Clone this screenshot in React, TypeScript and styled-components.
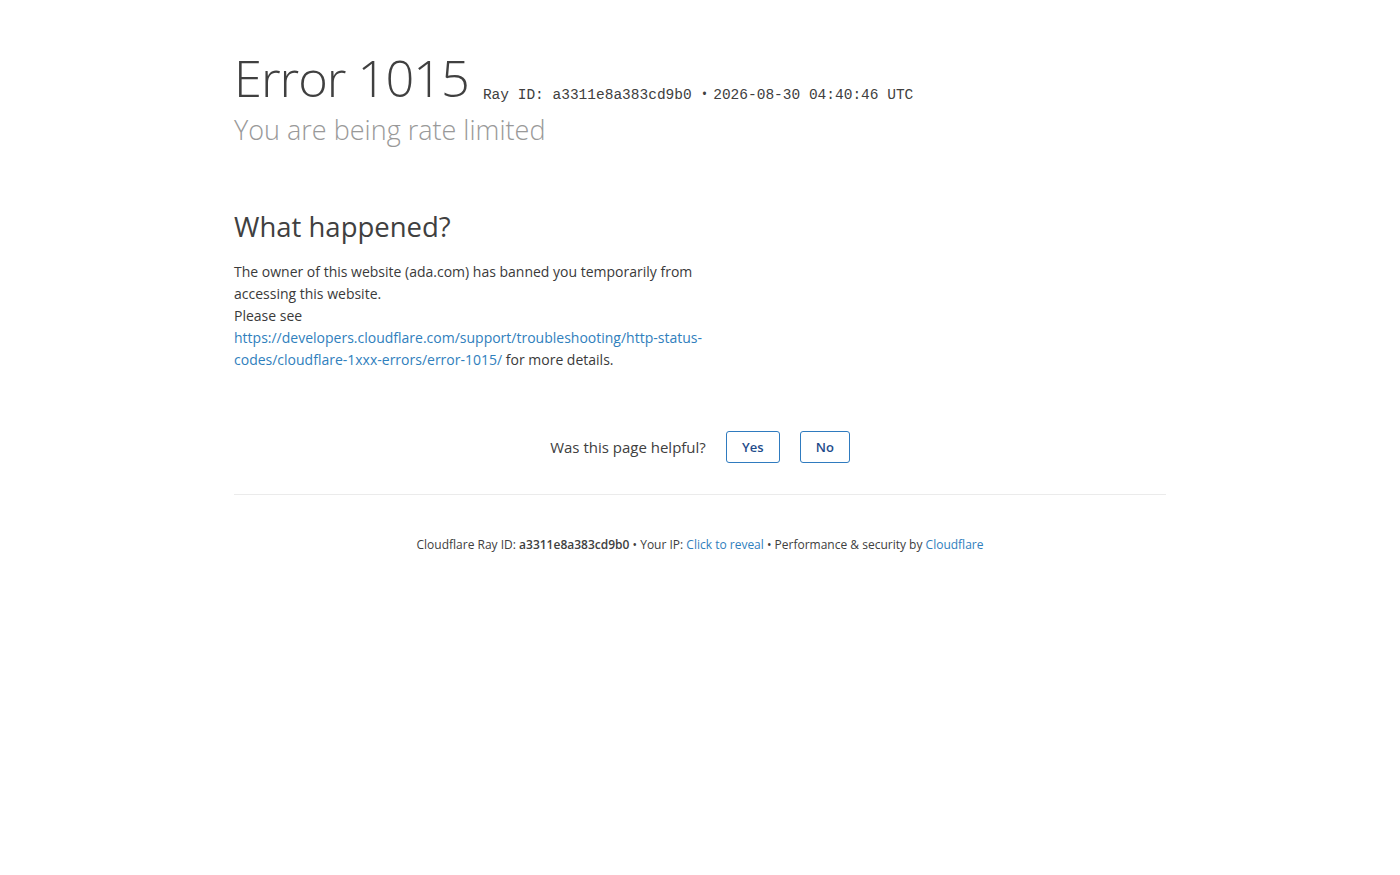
import React from 'react';
import styled, { createGlobalStyle } from 'styled-components';

const GlobalStyle = createGlobalStyle`
  html, body {
    margin: 0;
    padding: 0;
    background: #fff;
  }
  body {
    font-family: 'Open Sans', 'Noto Sans', sans-serif;
    color: #404040;
  }
`;

const Page = styled.div`
  width: 932px;
  margin: 0 auto;
  padding-top: 48px;
`;

const Header = styled.header`
  display: flex;
  flex-direction: column;
`;

const TitleRow = styled.div`
  display: flex;
  align-items: flex-end;
  gap: 14px;
`;

const Title = styled.h1`
  margin: 0;
  font-weight: 300;
  font-size: 50.5px;
  line-height: 60px;
  color: #404040;
  letter-spacing: -1px;
`;

const Meta = styled.span`
  font-family: 'Liberation Mono', 'Courier New', monospace;
  font-size: 14.5px;
  line-height: 16px;
  padding-bottom: 5px;
  color: #404040;
`;

const Dot = styled.span`
  font-family: 'Open Sans', 'Noto Sans', sans-serif;
  margin: 0 6px 0 10px;
`;

const Subtitle = styled.h2`
  margin: 4px 0 0;
  font-weight: 300;
  font-size: 27px;
  line-height: 36px;
  color: #999;
`;

const Section = styled.section`
  margin-top: 59px;
  width: 480px;
`;

const SectionTitle = styled.h2`
  margin: 0 0 14px;
  font-weight: 400;
  font-size: 27.5px;
  line-height: 40px;
  color: #404040;
`;

const Body = styled.p`
  margin: 0;
  font-size: 14px;
  line-height: 22px;
  color: #3a3a3a;
`;

const Link = styled.a`
  color: #3080bd;
  text-decoration: none;
`;

const Feedback = styled.div`
  display: flex;
  justify-content: center;
  align-items: center;
  gap: 20px;
  margin-top: 60px;
  padding-bottom: 31px;
  border-bottom: 1px solid #ebebeb;
`;

const Question = styled.span`
  font-size: 15px;
  color: #404040;
`;

const Buttons = styled.div`
  display: flex;
  gap: 20px;
`;

const FeedbackButton = styled.button<{ $w: number }>`
  width: ${(p) => p.$w}px;
  height: 32px;
  border: 1px solid #2f7bbf;
  border-radius: 3px;
  background: #fff;
  color: #1e4b8a;
  font-family: 'Open Sans', 'Noto Sans', sans-serif;
  font-size: 13px;
  font-weight: 600;
  cursor: pointer;
`;

const Footer = styled.footer`
  padding-top: 41px;
  text-align: center;
  font-size: 12px;
  color: #404040;
`;

const Strong = styled.span`
  font-weight: 600;
`;

export default function App() {
  return (
    <>
      <GlobalStyle />
      <Page>
        <Header>
          <TitleRow>
            <Title>Error 1015</Title>
            <Meta>
              Ray ID: a3311e8a383cd9b0<Dot>•</Dot>2026-08-30 04:40:46 UTC
            </Meta>
          </TitleRow>
          <Subtitle>You are being rate limited</Subtitle>
        </Header>

        <Section>
          <SectionTitle>What happened?</SectionTitle>
          <Body>The owner of this website (ada.com) has banned you temporarily from accessing this website.</Body>
          <Body>
            Please see{' '}
            <Link href="#">https://developers.cloudflare.com/support/troubleshooting/http-status-codes/cloudflare-1xxx-errors/error-1015/</Link>{' '}
            for more details.
          </Body>
        </Section>

        <Feedback>
          <Question>Was this page helpful?</Question>
          <Buttons>
            <FeedbackButton $w={54}>Yes</FeedbackButton>
            <FeedbackButton $w={50}>No</FeedbackButton>
          </Buttons>
        </Feedback>

        <Footer>
          Cloudflare Ray ID: <Strong>a3311e8a383cd9b0</Strong> • Your IP: <Link href="#">Click to reveal</Link> • Performance &amp; security by{' '}
          <Link href="#">Cloudflare</Link>
        </Footer>
      </Page>
    </>
  );
}
